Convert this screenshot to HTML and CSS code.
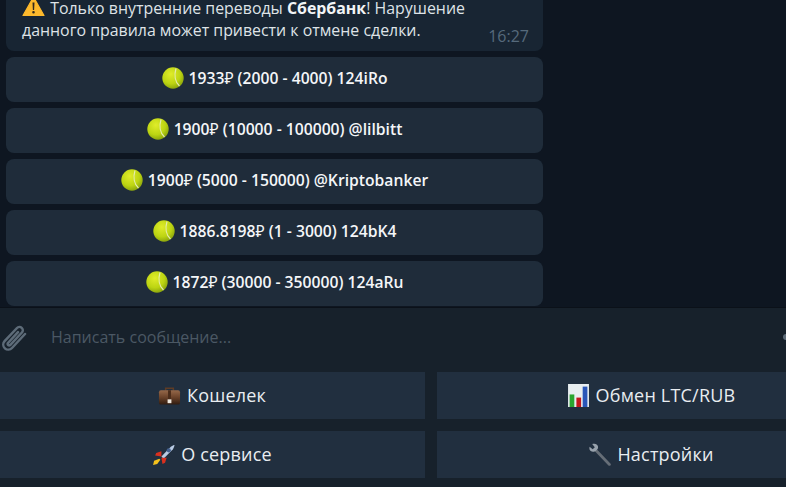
FILE: index.html
```html
<!DOCTYPE html>
<html lang="ru">
<head>
<meta charset="utf-8">
<title>Чат</title>
<link rel="stylesheet" href="styles.css">
</head>
<body>
<svg class="defs" width="0" height="0" aria-hidden="true">
  <defs>
    <radialGradient id="ballGrad" cx="40%" cy="32%" r="72%">
      <stop offset="0" stop-color="#e0ec2a"/>
      <stop offset="0.62" stop-color="#bcd412"/>
      <stop offset="1" stop-color="#86a00c"/>
    </radialGradient>
    <linearGradient id="caseGrad" x1="0" y1="0" x2="0" y2="1">
      <stop offset="0" stop-color="#96694a"/>
      <stop offset="0.5" stop-color="#6a4229"/>
      <stop offset="1" stop-color="#2f1b10"/>
    </linearGradient>
    <symbol id="ball" viewBox="0 0 22 22">
      <circle cx="11" cy="11" r="10.700" fill="url(#ballGrad)"/>
      <path d="M14 1.500C12 8 13 15 17.500 19" fill="none" stroke="#e4ecb0" stroke-width="1.200"/>
    </symbol>
  </defs>
</svg>
<main class="app">
  <section class="chat">
    <div class="message">
      <p class="message-text"><svg class="warn" viewBox="0 0 22 20"><path d="M11 1 21.500 19.500H.5Z" fill="#fdb92c" stroke="#fdb92c" stroke-width="1.200" stroke-linejoin="round"/><path d="M10 6.500h2l-.4 7.500h-1.200ZM11 15a1.300 1.300 0 1 1 0 2.600 1.300 1.300 0 0 1 0-2.600Z" fill="#33291c"/></svg> Только внутренние переводы <b>Сбербанк</b>! Нарушение<br>данного правила может привести к отмене сделки.</p>
      <span class="time">16:27</span>
    </div>
    <div class="offer"><svg class="ball"><use href="#ball"/></svg><span>1933<span class="rub">₽</span> (2000 - 4000) 124iRo</span></div>
    <div class="offer"><svg class="ball"><use href="#ball"/></svg><span>1900<span class="rub">₽</span> (10000 - 100000) @lilbitt</span></div>
    <div class="offer"><svg class="ball"><use href="#ball"/></svg><span>1900<span class="rub">₽</span> (5000 - 150000) @Kriptobanker</span></div>
    <div class="offer"><svg class="ball"><use href="#ball"/></svg><span>1886.8198<span class="rub">₽</span> (1 - 3000) 124bK4</span></div>
    <div class="offer"><svg class="ball"><use href="#ball"/></svg><span>1872<span class="rub">₽</span> (30000 - 350000) 124aRu</span></div>
  </section>
  <section class="composer">
    <svg class="clip" viewBox="0 0 26 28"><path d="M24.500 9 11.500 23a5 5 0 0 1-7.400-6.800L16.500 3a3.300 3.300 0 0 1 4.900 4.500L9.700 20a1.500 1.500 0 0 1-2.200-2L17.500 7.200" transform="translate(-1.500 1)" fill="none" stroke="#5d6b78" stroke-width="2.500" stroke-linecap="round"/></svg>
    <span class="placeholder">Написать сообщение...</span>
    <span class="dot"></span>
  </section>
  <section class="keyboard">
    <button class="key" type="button"><svg class="emoji emoji-wide" viewBox="0 0 24 20"><path d="M8 5V2.500h8V5" fill="none" stroke="#5e3c26" stroke-width="1.600"/><rect x="1" y="4.500" width="22" height="15" rx="2" fill="url(#caseGrad)"/><rect x="10.500" y="4.500" width="3" height="10" fill="#4a2c1a"/><rect x="10" y="14" width="4" height="4" fill="#eee7de"/></svg>Кошелек</button>
    <button class="key" type="button"><svg class="emoji" viewBox="0 0 20 22"><rect x="0" y="0" width="20" height="22" fill="#e8eef0"/><rect x="1.500" y="10" width="4.500" height="12" fill="#2aa52f"/><rect x="8" y="13" width="4.500" height="9" fill="#c3171b"/><rect x="14" y="2.500" width="4.500" height="19.500" fill="#2a56b8"/></svg>Обмен LTC/RUB</button>
    <button class="key" type="button"><svg class="emoji" viewBox="0 0 22 22"><path d="M9 13 18 3.500c1.500-1 3-1.500 3.500-1.500 0 .5-.5 2.500-1.500 4l-9 9Z" fill="#b9cbe4"/><circle cx="16" cy="7" r="2" fill="#44618f"/><path d="M9 8 4 9.500 3 12l6 1ZM14 14l-1.500 5L10 20l-1-6Z" fill="#d8301f"/><path d="M7 15 2 17l-1 4 4-1 3-4Z" fill="#f5c21c"/></svg>О сервисе</button>
    <button class="key" type="button"><svg class="emoji" viewBox="0 0 22 22"><path d="M7 6.500 20.500 20.500" stroke="#666e77" stroke-width="2.600" stroke-linecap="round"/><path d="M1.500 3.500 4.500 6l2-2L4 1c2.500-1 5 0 5.500 2s-.5 3-.5 3L7 8S4.500 9 3 8 1 5.500 1.500 3.500Z" fill="#98a2ac"/></svg>Настройки</button>
  </section>
</main>
</body>
</html>
```
FILE: styles.css
```css
* { box-sizing: border-box; }
html, body { margin: 0; height: 100%; }
body {
  width: 786px;
  height: 487px;
  overflow: hidden;
  background: #0e1621;
  font-family: "Open Sans", "Noto Sans", "DejaVu Sans", sans-serif;
  color: #f5f5f5;
}
.defs { position: absolute; }
.app { display: flex; flex-direction: column; height: 487px; }
.chat {
  height: 307px;
  padding: 0 243px 1px 6px;
  display: flex;
  flex-direction: column;
  justify-content: flex-end;
  gap: 6px;
  overflow: hidden;
}
.message {
  flex: none;
  display: flex;
  align-items: flex-end;
  justify-content: space-between;
  height: 60px;
  padding: 0 14px 5px 16px;
  background: #182533;
  border-radius: 0 0 8px 8px;
}
.message-text {
  margin: 0 0 5px;
  font-size: 15.900px;
  line-height: 22px;
  color: #dfe3e7;
  white-space: nowrap;
}
.message-text b { font-weight: 700; color: #f2f4f6; }
.warn { width: 23px; height: 20px; vertical-align: -2px; margin-right: 1px; }
.time { font-size: 16px; line-height: 20px; color: #566a7c; }
.offer {
  flex: none;
  height: 45px;
  padding-bottom: 4px;
  display: flex;
  align-items: center;
  justify-content: center;
  gap: 5px;
  background: #1f2c3a;
  border-radius: 8px;
  font-size: 15.700px;
  font-weight: 600;
  color: #f4f6f8;
}
.rub { font-weight: 400; }
.ball { width: 22px; height: 22px; margin-top: 1px; }
.composer {
  height: 65px;
  padding-bottom: 7px;
  display: flex;
  align-items: center;
  background: #17212b;
  border-top: 1px solid #0b1119;
}
.clip { width: 26px; height: 28px; margin: 3px 0 0 2px; flex: none; }
.placeholder { margin-left: 23px; font-size: 16px; color: #4b5864; }
.dot {
  width: 6px;
  height: 6px;
  margin-left: auto;
  margin-right: -3px;
  border-radius: 50%;
  background: #5d6b78;
}
.keyboard {
  flex: 1;
  width: 866px;
  margin-left: -1px;
  display: grid;
  grid-template-columns: 426px 428px;
  grid-auto-rows: 47px;
  gap: 12px;
  background: #17212b;
}
.key {
  display: flex;
  align-items: center;
  justify-content: center;
  gap: 6px;
  padding: 0 0 1px;
  border: 0;
  background: #212f3f;
  font-family: inherit;
  font-size: 18px;
  font-weight: 500;
  letter-spacing: 0.2px;
  color: #e9edf1;
}
.emoji { width: 23px; height: 23px; flex: none; }
.emoji-wide { height: 21px; }
```
